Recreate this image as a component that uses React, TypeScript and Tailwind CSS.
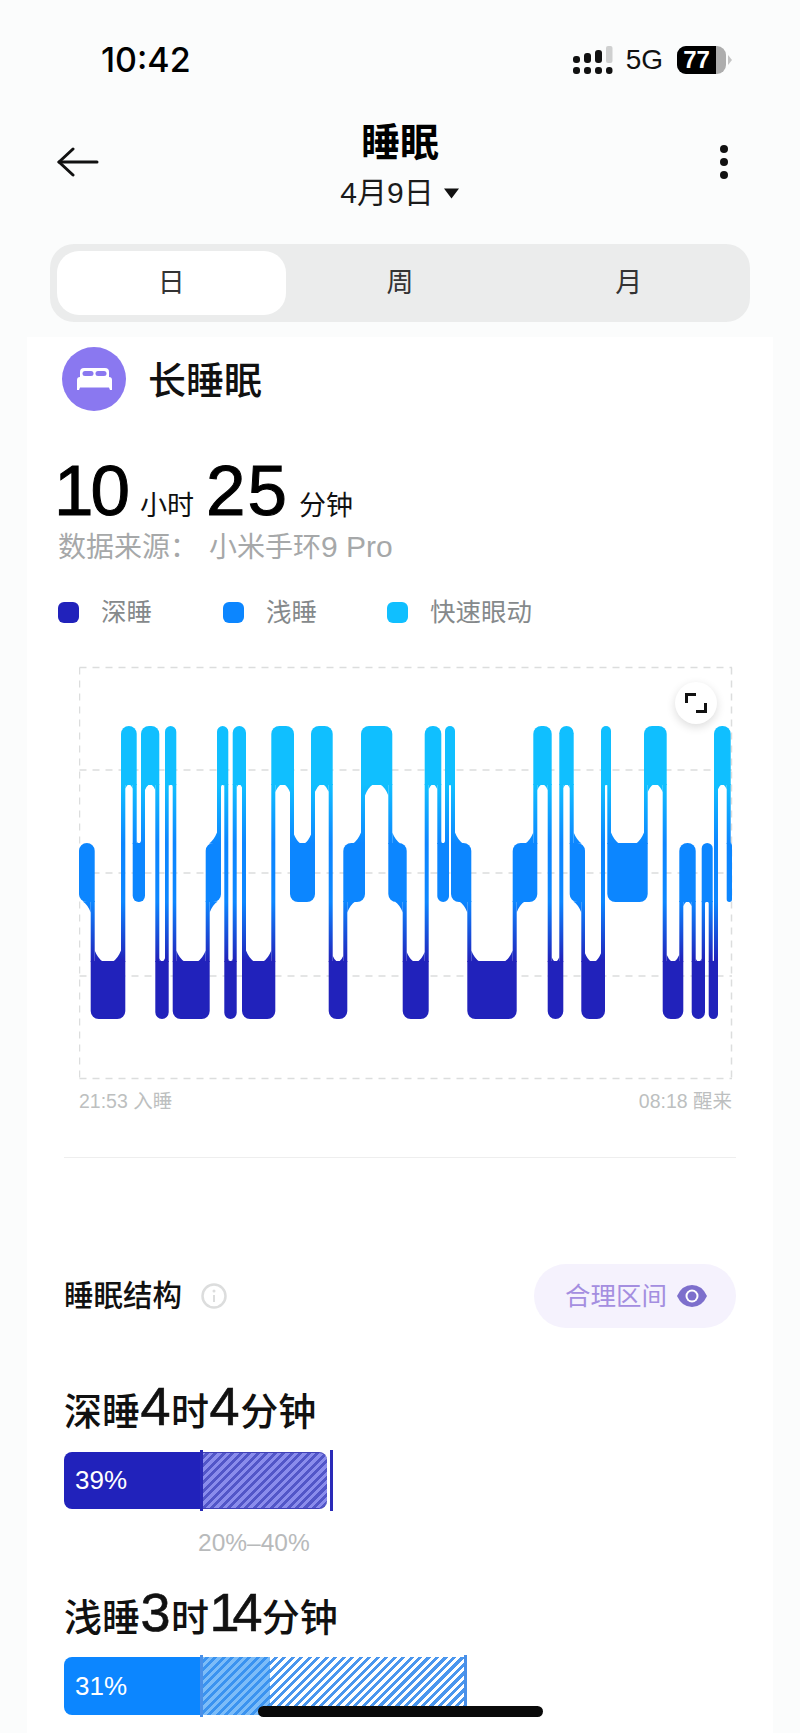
import { ReactNode } from 'react'

type Seg = [number, number, number]

// level (0 rem, 1 light, 2 deep), left, right, in page pixels
const segs: Seg[] = [
  [1, 79, 94.7], [2, 90.7, 125.3], [0, 121, 136.7], [1, 132.7, 145], [0, 141, 159.3], [2, 155.3, 168.7],
  [0, 165, 176.3], [2, 172.7, 209.7], [1, 205.7, 221], [0, 217, 228.3], [2, 224.3, 236.7], [0, 232.7, 246],
  [2, 242, 275.3], [0, 271.3, 294], [1, 290, 315], [0, 311, 332.7], [2, 328.7, 347.3], [1, 343.3, 365],
  [0, 361, 392.3], [1, 388.3, 406.7], [2, 402.7, 428.7], [0, 424.7, 441.3], [1, 437.3, 449], [0, 445, 455],
  [1, 451, 471.3], [2, 467.3, 516.7], [1, 512.7, 537.3], [0, 533.3, 551.7], [2, 547.7, 563.3], [0, 559.3, 573.7],
  [1, 569.7, 585], [2, 581.3, 605], [0, 601, 611], [1, 607.3, 647.7], [0, 644, 666.7], [2, 662.7, 683.3],
  [1, 679.3, 695.7], [2, 691.7, 705], [1, 701.7, 712.7], [2, 708.7, 718], [0, 714, 730.7], [1, 726.7, 732],
]
const tops = [726, 843, 961]
const bottoms = [785, 902, 1019]

function segPath(i: number) {
  const [lv, x1, x2] = segs[i]
  const prev = segs[i - 1]
  const next = segs[i + 1]
  const t = tops[lv]
  const b = bottoms[lv]
  const r = Math.min(8, (x2 - x1) / 2)
  const tl = prev && prev[0] < lv ? 0 : r
  const bl = prev && prev[0] > lv ? 0 : r
  const tr = next && next[0] < lv ? 0 : r
  const br = next && next[0] > lv ? 0 : r
  return `M${x1 + tl} ${t}H${x2 - tr}A${tr} ${tr} 0 0 1 ${x2} ${t + tr}V${b - br}A${br} ${br} 0 0 1 ${x2 - br} ${b}H${x1 + bl}A${bl} ${bl} 0 0 1 ${x1} ${b - bl}V${t + tl}A${tl} ${tl} 0 0 1 ${x1 + tl} ${t}Z`
}

// room left for the fillet along one edge of a segment
function filletSize(i: number, side: 'top' | 'bottom') {
  const [lv, x1, x2] = segs[i]
  const hits = [segs[i - 1], segs[i + 1]].filter(n => n && (side === 'top' ? n[0] < lv : n[0] > lv)).length
  const free = x2 - x1 - 4 * hits
  return Math.max(0.5, Math.min(8, hits === 2 ? free * 0.38 : free * 0.8))
}

function connectorPaths() {
  const out: string[] = []
  for (let i = 0; i < segs.length - 1; i++) {
    const a = segs[i]
    const b = segs[i + 1]
    const down = a[0] < b[0]
    const upper = down ? i : i + 1
    const lower = down ? i + 1 : i
    const ub = bottoms[segs[upper][0]]
    const lt = tops[segs[lower][0]]
    const xL = b[1]
    const xR = a[2]
    out.push(`M${xL} ${ub - 1}H${xR}V${lt + 1}H${xL}Z`)
    const fu = filletSize(upper, 'bottom')
    const fl = filletSize(lower, 'top')
    // straight-ish chamfers, the reference joints are closer to a slope than a curve
    if (down) {
      out.push(`M${xL} ${ub - 0.5}H${xL - fu}Q${xL - fu * 0.4} ${ub + fu * 0.3} ${xL} ${ub + fu * 1.3}Z`)
      out.push(`M${xR} ${lt + 0.5}H${xR + fl}Q${xR + fl * 0.4} ${lt - fl * 0.3} ${xR} ${lt - fl * 1.3}Z`)
    } else {
      out.push(`M${xR} ${ub - 0.5}H${xR + fu}Q${xR + fu * 0.4} ${ub + fu * 0.3} ${xR} ${ub + fu * 1.3}Z`)
      out.push(`M${xL} ${lt + 0.5}H${xL - fl}Q${xL - fl * 0.4} ${lt - fl * 0.3} ${xL} ${lt - fl * 1.3}Z`)
    }
  }
  return out
}

function SleepChart() {
  return (
    <svg viewBox="79 666 654 414" className="block h-[414px] w-[654px]">
      <defs>
        <linearGradient id="stage" gradientUnits="userSpaceOnUse" x1="0" y1="726" x2="0" y2="1019">
          <stop offset="0.2" stopColor="#10bfff" />
          <stop offset="0.4" stopColor="#0c86ff" />
          <stop offset="0.6" stopColor="#0c86ff" />
          <stop offset="0.8" stopColor="#2122bb" />
        </linearGradient>
      </defs>
      <g stroke="#dcdddd" strokeWidth="1.5" strokeDasharray="7 6" fill="none">
        <path d="M79.5 667.5H732" />
        <path d="M79.5 770H732" />
        <path d="M79.5 873H732" />
        <path d="M79.5 976H732" />
        <path d="M79.5 1078.5H732" />
        <path d="M79.5 667.5V1078" />
        <path d="M731.5 667.5V1078" />
      </g>
      <g fill="url(#stage)">
        {segs.map((_, i) => <path key={i} d={segPath(i)} />)}
        {connectorPaths().map((d, i) => <path key={i} d={d} />)}
      </g>
    </svg>
  )
}

function StatusBar() {
  return (
    <div className="mt-[44px] flex h-[32px] items-center justify-between pl-[101px] pr-[67px]">
      <span className="font-['Inter','Liberation_Sans',sans-serif] text-[34px] font-medium leading-[32px] text-black">10:42</span>
      <div className="flex items-center">
        <svg width="40" height="28" viewBox="574 45 40 28" className="block">
          <rect x="574" y="55" width="7" height="7" rx="3" fill="#111" />
          <rect x="585" y="52" width="7" height="10" rx="3" fill="#111" />
          <rect x="596" y="49" width="7" height="13" rx="3" fill="#111" />
          <rect x="607" y="45" width="6.5" height="17" rx="2" fill="#cfd0d0" />
          <rect x="574" y="66" width="7" height="7" rx="3" fill="#111" />
          <rect x="585" y="66" width="7" height="7" rx="3" fill="#111" />
          <rect x="596" y="66" width="7" height="7" rx="3" fill="#111" />
          <rect x="607" y="66" width="6.5" height="7" rx="3" fill="#111" />
        </svg>
        <span className="ml-[13px] text-[28px] leading-[32px] text-[#111]">5G</span>
        <div className="ml-[14px] flex items-center">
          <div className="flex h-[28px] w-[49px] overflow-hidden rounded-[9px] bg-[#adadad]">
            <div className="flex w-[39px] items-center justify-center bg-black text-[24px] font-bold leading-[28px] text-white">77</div>
          </div>
          <svg width="5" height="10" viewBox="0 0 5 10" className="ml-[2px] block">
            <path d="M0 0L4 5L0 10Z" fill="#c4c4c4" />
          </svg>
        </div>
      </div>
    </div>
  )
}

function Header() {
  return (
    <div className="mt-[47px] grid grid-cols-[1fr_auto_1fr] items-center px-[57px]">
      <svg width="42" height="30" viewBox="0 0 42 30" fill="none" stroke="#111" strokeWidth="3" strokeLinecap="round" strokeLinejoin="round" className="-mt-[8px] block">
        <path d="M2 15H40" />
        <path d="M16 2L2 15L16 28" />
      </svg>
      <div className="flex flex-col items-center">
        <div className="text-[39px] font-bold leading-[40px] text-black">睡眠</div>
        <div className="mt-[15px] flex items-center text-[30px] leading-[30px] text-[#1a1a1a]">
          <span>4月9日</span>
          <svg width="17" height="11" viewBox="0 0 17 11" className="ml-[9px] block">
            <path d="M1 0.5H16L8.5 10.5Z" fill="#111" />
          </svg>
        </div>
      </div>
      <div className="-mt-[8px] mr-[15px] flex flex-col items-end gap-[5px]">
        <span className="block h-[8px] w-[8px] rounded-full bg-[#111]" />
        <span className="block h-[8px] w-[8px] rounded-full bg-[#111]" />
        <span className="block h-[8px] w-[8px] rounded-full bg-[#111]" />
      </div>
    </div>
  )
}

function Tabs() {
  return (
    <div className="mx-[50px] mt-[36px] grid h-[78px] grid-cols-3 rounded-[24px] bg-[#ebecec] p-[7px] text-[27px] text-[#333]">
      <div className="flex items-center justify-center rounded-[22px] bg-white">日</div>
      <div className="flex items-center justify-center">周</div>
      <div className="flex items-center justify-center">月</div>
    </div>
  )
}

function LegendItem({ color, label, width }: { color: string; label: string; width: string }) {
  return (
    <div className={`flex items-center ${width}`}>
      <span className={`block h-[21px] w-[21px] rounded-[6px] ${color}`} />
      <span className="ml-[22px] text-[25.5px] leading-[30px] text-[#85898b]">{label}</span>
    </div>
  )
}

function DurationTitle({ children }: { children: ReactNode }) {
  return <div className="flex h-[50px] items-baseline text-[38px] font-medium leading-[50px] text-[#111]">{children}</div>
}

function Num({ children, tight }: { children: ReactNode; tight?: boolean }) {
  return (
    <span className={`px-[0.5px] text-[54px] font-normal leading-[50px] [-webkit-text-stroke:0.6px_#111] ${tight ? 'tracking-[-7px] pr-[6px]' : ''}`}>
      {children}
    </span>
  )
}

function App() {
  return (
    <div className="relative h-[1733px] w-[800px] overflow-hidden bg-[#fbfcfc] font-['Liberation_Sans','Noto_Sans_CJK_SC',sans-serif]">
      <StatusBar />
      <Header />
      <Tabs />

      <div className="mx-[27px] mt-[15px] h-[1396px] bg-white pt-[10px]">
        <div className="ml-[35px] flex items-center gap-[22px]">
          <div className="flex h-[64px] w-[64px] items-center justify-center rounded-full bg-[#8a78f0]">
            <svg width="35" height="22" viewBox="0 0 35 22">
              <path d="M3 9V4Q3 0 7 0H28Q32 0 32 4V9Z" fill="#fff" />
              <rect x="5.5" y="3" width="11" height="5" rx="2.5" fill="#8a78f0" />
              <rect x="18.5" y="3" width="11" height="5" rx="2.5" fill="#8a78f0" />
              <path d="M3 9H32Q35 9 35 12V22H33L32 19.5H3L2 22H0V12Q0 9 3 9Z" fill="#fff" />
            </svg>
          </div>
          <span className="pt-[3px] text-[38px] font-medium leading-[40px] text-[#111]">长睡眠</span>
        </div>

        <div className="ml-[27px] mt-[45px] flex h-[70px] items-baseline text-black">
          <span className="text-[71px] leading-[70px] tracking-[-3px] [-webkit-text-stroke:1px_#000]">10</span>
          <span className="ml-[13px] text-[27px] leading-[70px] text-[#111]">小时</span>
          <span className="ml-[12px] text-[71px] leading-[70px] tracking-[2px] [-webkit-text-stroke:1px_#000]">25</span>
          <span className="ml-[10px] text-[27px] leading-[70px] text-[#111]">分钟</span>
        </div>
        <div className="ml-[31px] mt-[6px] flex h-[30px] items-baseline text-[28px] leading-[30px] text-[#a6a8a9]">
          <span>数据来源：</span>
          <span className="ml-[11px]">小米手环<span className="text-[30px]">9 Pro</span></span>
        </div>

        <div className="ml-[31px] mt-[35px] flex">
          <LegendItem color="bg-[#2122bb]" label="深睡" width="w-[165px]" />
          <LegendItem color="bg-[#0c86ff]" label="浅睡" width="w-[164px]" />
          <LegendItem color="bg-[#10bfff]" label="快速眼动" width="w-[200px]" />
        </div>

        <div className="relative ml-[52px] mt-[39px] w-[654px]">
          <SleepChart />
          <button className="absolute left-[596px] top-[16px] flex h-[42px] w-[42px] items-center justify-center rounded-full bg-white shadow-[0_3px_10px_rgba(0,0,0,0.14)]">
            <svg width="22" height="20" viewBox="0 0 22 20" fill="none" stroke="#111" strokeWidth="3">
              <path d="M1.5 10V1.5H11" />
              <path d="M11 18.5H20.5V10" />
            </svg>
          </button>
        </div>
        <div className="ml-[52px] mt-[9px] flex w-[653px] justify-between text-[19.5px] leading-[24px] text-[#bdbfc0]">
          <span>21:53 入睡</span>
          <span>08:18 醒来</span>
        </div>

        <div className="mx-[37px] mt-[44px] h-[1px] bg-[#eeeeee]" />

        <div className="mx-[37px] mt-[106px] flex items-center justify-between">
          <div className="flex items-center">
            <span className="text-[29.5px] font-medium leading-[32px] text-[#111]">睡眠结构</span>
            <svg width="26" height="26" viewBox="0 0 26 26" fill="none" className="ml-[19px] block">
              <circle cx="13" cy="13" r="11.5" stroke="#dcdddd" strokeWidth="2.5" />
              <circle cx="13" cy="8" r="1.5" fill="#dcdddd" />
              <path d="M13 12V19" stroke="#dcdddd" strokeWidth="2" />
            </svg>
          </div>
          <div className="flex h-[64px] w-[202px] items-center rounded-full bg-[#f5f2fd] pl-[31px]">
            <span className="text-[25.5px] leading-[30px] text-[#a48ee0]">合理区间</span>
            <svg width="30" height="22" viewBox="0 0 30 22" className="ml-[10px] block">
              <path d="M0 11Q5 0 15 0Q25 0 30 11Q25 22 15 22Q5 22 0 11Z" fill="#7d6fcc" />
              <circle cx="15" cy="11" r="6.5" fill="#fff" />
              <circle cx="15" cy="11" r="4.5" fill="#7d6fcc" />
            </svg>
          </div>
        </div>

        <div className="ml-[37px] mt-[53px]">
          <DurationTitle>深睡<Num>4</Num>时<Num>4</Num>分钟</DurationTitle>
        </div>
        <div className="relative ml-[37px] mt-[21px] flex h-[57px] w-[263px]">
          <div className="flex w-[137px] items-center rounded-l-[8px] bg-[#2122bb] pl-[11px] text-[26px] text-white">39%</div>
          <div className="w-[126px] rounded-r-[8px] border-y border-[#4040b8] bg-[repeating-linear-gradient(135deg,#8a8cec_0_3px,#5256c8_3px_6px)]" />
          <span className="absolute -top-[2px] left-[136px] h-[61px] w-[3px] bg-[#2a2ab8]" />
          <span className="absolute -top-[2px] left-[266px] h-[61px] w-[3px] bg-[#2a2ab8]" />
        </div>
        <div className="ml-[171px] mt-[20px] text-[24.5px] leading-[28px] text-[#b8babb]">20%–40%</div>

        <div className="ml-[37px] mt-[30px]">
          <DurationTitle>浅睡<Num>3</Num>时<Num tight>14</Num>分钟</DurationTitle>
        </div>
        <div className="relative ml-[37px] mt-[20px] flex h-[58px] w-[401px]">
          <div className="flex w-[137px] items-center rounded-l-[8px] bg-[#0c86ff] pl-[11px] text-[26px] text-white">31%</div>
          <div className="w-[69px] bg-[repeating-linear-gradient(135deg,#7cbcf8_0_3px,#3a93f0_3px_6px)]" />
          <div className="w-[195px] bg-[repeating-linear-gradient(135deg,#ffffff_0_3px,#4a96ee_3px_6px)]" />
          <span className="absolute -top-[2px] left-[136px] h-[62px] w-[3px] bg-[#4a90e8]" />
          <span className="absolute -top-[2px] left-[400px] h-[60px] w-[3px] bg-[#4a90e8]" />
        </div>
      </div>

      <div className="absolute left-[258px] top-[1706px] h-[11px] w-[285px] rounded-full bg-[#0a0a0a]" />
    </div>
  )
}

export default App
